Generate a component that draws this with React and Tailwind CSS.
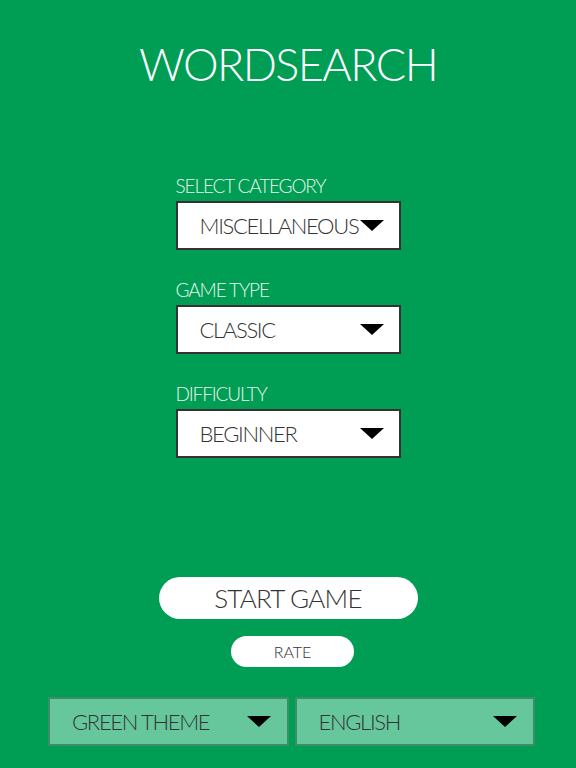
import React from "react";

const font = { fontFamily: "Lato, 'Open Sans', sans-serif" };

const Caret = ({ className = "" }) => (
  <svg width="24" height="11" viewBox="0 0 24 11" className={className}>
    <polygon points="0,0 24,0 12,11" fill="#000" />
  </svg>
);

const Picker = ({ label, value }) => (
  <div className="flex flex-col">
    <span className="text-[19px] font-light leading-none text-[#e6f5ec] tracking-[-0.06em] mb-[6px]">
      {label}
    </span>
    <div className="h-[49px] bg-white border-2 border-[#333] flex items-center pl-[22px] pr-[15px]">
      <span className="flex-1 text-[22px] font-light text-[#333] tracking-[-0.06em] whitespace-nowrap">
        {value}
      </span>
      <Caret className="shrink-0" />
    </div>
  </div>
);

const BottomSelect = ({ value }) => (
  <div className="flex-1 h-[49px] bg-[#66c79d] border-2 border-[#3f8d68] flex items-center pl-[22px] pr-[16px]">
    <span className="flex-1 text-[22px] font-light text-[#333] tracking-[-0.06em]">{value}</span>
    <Caret />
  </div>
);

export default function App() {
  return (
    <div className="h-[768px] w-full bg-[#009e55] flex flex-col items-center overflow-hidden" style={font}>
      <h1 className="mt-[42px] text-[45px] font-light text-white leading-none tracking-[-0.035em]">
        WORDSEARCH
      </h1>

      <div className="mt-[89px] w-[225px] flex flex-col gap-[30px]">
        <Picker label="SELECT CATEGORY" value="MISCELLANEOUS" />
        <Picker label="GAME TYPE" value="CLASSIC" />
        <Picker label="DIFFICULTY" value="BEGINNER" />
      </div>

      <button className="mt-[119px] w-[259px] h-[42px] rounded-full bg-white text-[26px] font-light text-[#333] leading-none tracking-[-0.03em]">
        START GAME
      </button>
      <button className="mt-[17px] ml-[9px] w-[123px] h-[31px] rounded-full bg-white text-[16px] font-light text-[#333] leading-none">
        RATE
      </button>

      <div className="mt-auto mb-[22px] w-full pl-[48px] pr-[41px] flex gap-[6px]">
        <BottomSelect value="GREEN THEME" />
        <BottomSelect value="ENGLISH" />
      </div>
    </div>
  );
}
